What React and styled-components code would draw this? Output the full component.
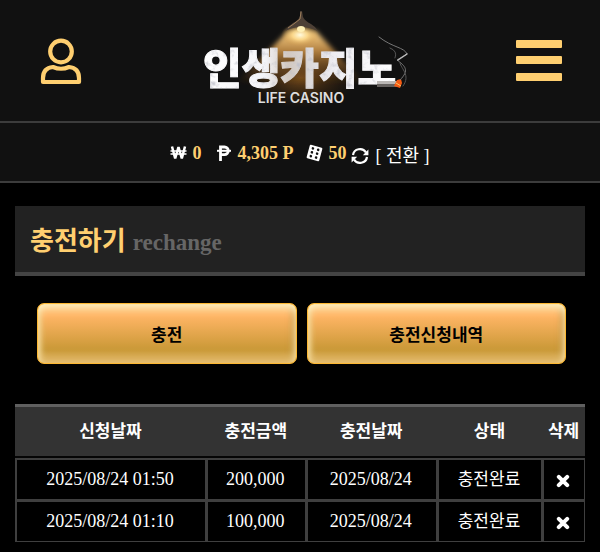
import React from "react";
import styled, { createGlobalStyle } from "styled-components";

const serif = '"Liberation Serif", "Noto Sans CJK KR", serif';
const korean = '"Noto Sans CJK KR", sans-serif';
const gold = "#ffcf70";

const GlobalStyle = createGlobalStyle`
  *, *::before, *::after { box-sizing: border-box; }
  body { margin: 0; background: #000; color: #fff; font-family: ${serif}; }
  button { color: inherit; cursor: pointer; }
`;

const Header = styled.header`
  display: flex;
  align-items: center;
  justify-content: space-between;
  height: 123px;
  padding: 0 36px;
  background: #111;
  border-bottom: 2px solid #3c3c3c;
`;

const IconButton = styled.button`
  display: flex;
  padding: 0;
  border: 0;
  background: none;
`;

const LogoLink = styled.a`
  display: block;
  height: 121px;
`;

const Balance = styled.div`
  display: flex;
  align-items: center;
  justify-content: center;
  height: 60px;
  padding-top: 1px;
  background: #111;
  border-bottom: 2px solid #3c3c3c;
  font-size: 18px;
  line-height: 24px;
`;

const Amount = styled.span`
  display: flex;
  align-items: center;
  gap: 5px;
  margin-right: ${(p) => p.$after}px;
  color: ${gold};
  font-weight: bold;
`;

const Convert = styled.button`
  display: flex;
  align-items: center;
  gap: 6px;
  padding: 6px 0 0;
  border: 0;
  background: none;
  font-family: ${serif};
  font-size: 18px;
  line-height: 24px;
`;

const Main = styled.main`
  padding: 23px 15px 8px;
`;

const TitleBar = styled.div`
  display: flex;
  align-items: baseline;
  gap: 7px;
  height: 70px;
  padding: 13px 15px 0;
  background: #222;
  border-bottom: 4px solid #444;
`;

const Title = styled.h1`
  margin: 0;
  color: ${gold};
  font: bold 26px/40px ${korean};
`;

const Subtitle = styled.span`
  color: #666;
  font-size: 23px;
  font-weight: bold;
`;

const Actions = styled.div`
  display: grid;
  grid-template-columns: 1fr 1fr;
  gap: 10px;
  padding: 27px 19px 40px 22px;
`;

const Action = styled.button`
  height: 61px;
  padding: 0;
  border: 1px solid #fdb833;
  border-radius: 7px;
  background: linear-gradient(#ffb565 20%, #c99836 78%, #d2a34b);
  box-shadow: inset 0 0 1px #fdb833, inset 0 5px 8px #fff3c4,
    inset 0 -7px 8px #e2b969, inset 2px 0 5px #ffe0a077,
    inset -4px 0 6px #a9782b99;
  color: #000;
  font: bold 17px/24px ${korean};
`;

const Table = styled.table`
  width: 100%;
  border-collapse: separate;
  border-spacing: 0;
  table-layout: fixed;
  text-align: center;
`;

const Col = styled.col`
  width: ${(p) => p.$width};
`;

const HeadCell = styled.th`
  height: 54px;
  padding: 0 0 4px;
  background: #333;
  border-top: 3px solid #606060;
  border-bottom: 2px solid #050505;
  font: bold 17px/24px ${korean};
  white-space: nowrap;
`;

const Cell = styled.td`
  height: 42px;
  padding: 0 2px 2px 0;
  border: solid #3f3f3f;
  border-width: 2px 1px 1px 2px;
  font-size: 18px;
  line-height: 24px;
`;

const StatusCell = styled(Cell)`
  padding-bottom: 4px;
  font-family: ${korean};
  font-size: 17px;
`;

const Remove = styled.button`
  display: inline-flex;
  padding: 2px 0 0;
  border: 0;
  background: none;
  vertical-align: middle;
`;

const LogoText = styled.text`
  font-family: ${korean};
  font-size: 42px;
  font-weight: 900;
`;

const LogoCaption = styled.text`
  font-family: Inter, sans-serif;
  font-size: 14px;
  font-weight: 600;
`;

const UserIcon = () => (
  <svg width="50" height="50" viewBox="0 0 50 50" fill="none" stroke={gold} strokeWidth="4.2" strokeLinejoin="round" aria-hidden="true">
    <circle cx="25" cy="15.5" r="10.8" />
    <path d="M7 46V42Q7 32 17 31Q25 34.5 33 31Q43 32 43 42V46Z" />
  </svg>
);

const MenuIcon = () => (
  <svg width="48" height="42" viewBox="0 0 48 42" fill={gold} aria-hidden="true">
    <rect x="0" y="0" width="46" height="8" rx="1" />
    <rect x="0" y="16" width="46" height="8" rx="1" />
    <rect x="0" y="33" width="46" height="8" rx="1" />
  </svg>
);

const WonIcon = () => (
  <svg width="17" height="18" viewBox="0 0 17 18" fill="none" stroke="#fff" aria-hidden="true">
    <path d="M2 2.5L5.2 14.5L8.5 3L11.8 14.5L15 2.5" strokeWidth="2.5" strokeLinejoin="bevel" />
    <path d="M.5 7H16.5M.5 10H16.5" strokeWidth="1.3" />
  </svg>
);

const PesoIcon = () => (
  <svg width="16" height="18" viewBox="0 0 16 18" fill="none" stroke="#fff" aria-hidden="true">
    <path d="M4.5 17V3H8.5A3.7 3.7 0 0 1 8.5 10.6H4.5" strokeWidth="2.8" />
    <path d="M1 6.8H15" strokeWidth="2" />
  </svg>
);

const DiceIcon = () => (
  <svg width="17" height="18" viewBox="0 0 17 18" aria-hidden="true">
    <g transform="rotate(15 8.5 9)">
      <rect x="2" y="2" width="13" height="14" rx="1" fill="#fff" />
      <g fill="#111">
        <circle cx="5.8" cy="5" r="1.3" /><circle cx="11.2" cy="5" r="1.3" />
        <circle cx="5.8" cy="9" r="1.3" /><circle cx="11.2" cy="9" r="1.3" />
        <circle cx="5.8" cy="13" r="1.3" /><circle cx="11.2" cy="13" r="1.3" />
      </g>
    </g>
  </svg>
);

const SyncIcon = () => (
  <svg width="18" height="18" viewBox="0 0 18 18" aria-hidden="true">
    <g fill="none" stroke="#fff" strokeWidth="2.2">
      <path d="M2 8A7 6.8 0 0 1 15 5.5" />
      <path d="M16 10A7 6.8 0 0 1 3 12.5" />
    </g>
    <path d="M17.4 2.5V8.2H11.8ZM.6 15.5V9.8H6.2Z" fill="#fff" />
  </svg>
);

const CrossIcon = () => (
  <svg width="14" height="14" viewBox="0 0 14 14" aria-hidden="true">
    <path d="M2.8 2.8L11.2 11.2M11.2 2.8L2.8 11.2" stroke="#fff" strokeWidth="4" strokeLinecap="round" />
  </svg>
);

const Logo = () => (
  <svg width="220" height="121" viewBox="0 0 220 121" role="img" aria-label="인생카지노 LIFE CASINO">
    <defs>
      <linearGradient id="beam" x1="0" y1="0" x2="0" y2="1">
        <stop offset="0" stopColor="#ffd78c" />
        <stop offset=".4" stopColor="#bd8640" stopOpacity=".9" />
        <stop offset="1" stopColor="#6a3d12" stopOpacity="0" />
      </linearGradient>
      <radialGradient id="halo">
        <stop offset="0" stopColor="#8d5a20" stopOpacity=".8" />
        <stop offset="1" stopColor="#45270a" stopOpacity="0" />
      </radialGradient>
      <radialGradient id="bulb">
        <stop offset="0" stopColor="#fffbe0" />
        <stop offset=".4" stopColor="#ffdc8e" stopOpacity=".85" />
        <stop offset="1" stopColor="#c78c3d" stopOpacity="0" />
      </radialGradient>
      <linearGradient id="stone" x1="0" y1="0" x2="1" y2="0">
        <stop offset="0" stopColor="#fff" />
        <stop offset=".32" stopColor="#f4f4f8" />
        <stop offset=".44" stopColor="#d2c8c0" />
        <stop offset=".55" stopColor="#dcd9da" />
        <stop offset=".68" stopColor="#eeedf2" />
        <stop offset="1" stopColor="#fff" />
      </linearGradient>
      <filter id="soft" x="-20%" y="-20%" width="140%" height="140%">
        <feGaussianBlur stdDeviation="2.5" />
      </filter>
      <filter id="haze" x="-20%" y="-20%" width="140%" height="140%">
        <feGaussianBlur stdDeviation=".5" />
      </filter>
      <filter id="grain" x="-5%" y="-5%" width="110%" height="110%">
        <feTurbulence type="fractalNoise" baseFrequency=".16" numOctaves="3" seed="7" result="noise" />
        <feColorMatrix in="noise" values="0 0 0 0 .5  0 0 0 0 .51  0 0 0 0 .58  2.2 0 0 0 -1.15" result="marks" />
        <feComposite in="marks" in2="SourceAlpha" operator="in" result="texture" />
        <feMerge><feMergeNode in="SourceGraphic" /><feMergeNode in="texture" /></feMerge>
      </filter>
    </defs>
    <ellipse cx="110" cy="78" rx="56" ry="30" fill="url(#halo)" />
    <path d="M97 31L45 84H174L125 31Z" fill="url(#beam)" filter="url(#soft)" />
    <ellipse cx="109" cy="35" rx="19" ry="12" fill="url(#bulb)" />
    <path d="M109 11H111L112 17Q114 21 120 24Q125 27 127 31Q110 23 94 31Q97 26 102 23Q108 20 109 16Z" fill="#4d4036" />
    <path d="M110 12L109 19Q103 24 97 28" fill="none" stroke="#9b7c59" />
    <ellipse cx="110" cy="29" rx="4" ry="3" fill="#fff0b5" />
    <LogoText x="12" y="84" fill="url(#stone)" stroke="url(#stone)" strokeWidth="1" filter="url(#grain)">인생카지노</LogoText>
    <path d="M186 81H206V87H186Z" fill="#b9b6b4" />
    <path d="M186 84H206V87H186Z" fill="#65615f" />
    <path d="M206 80L210 79L211 83L209 88L203 86Z" fill="#f45b13" />
    <path d="M205 83L210 86" stroke="#ffc265" />
    <g fill="none" strokeLinecap="round" filter="url(#haze)">
      <path d="M209 80C219 70 214 66 206 60L216 54C213 47 202 48 188 37" stroke="#777" />
      <path d="M212 86C220 75 210 69 209 63M199 48Q207 51 204 58" stroke="#555" />
      <path d="M207 60L216 54" stroke="#bbb" strokeWidth="1.5" />
    </g>
    <LogoCaption x="110" y="103" textAnchor="middle" fill="#ddd">LIFE CASINO</LogoCaption>
  </svg>
);

const columns = [
  ["신청날짜", "33.5%"],
  ["충전금액", "17.5%"],
  ["충전날짜", "23%"],
  ["상태", "18.5%"],
  ["삭제", "7.5%"],
];

const rows = [
  ["2025/08/24 01:50", "200,000", "2025/08/24", "충전완료"],
  ["2025/08/24 01:10", "100,000", "2025/08/24", "충전완료"],
];

export default function App() {
  return (
    <>
      <GlobalStyle />
      <Header>
        <IconButton aria-label="내 정보"><UserIcon /></IconButton>
        <LogoLink href="#"><Logo /></LogoLink>
        <IconButton aria-label="메뉴"><MenuIcon /></IconButton>
      </Header>
      <Balance>
        <Amount $after={15}><WonIcon />0</Amount>
        <Amount $after={13}><PesoIcon />4,305 P</Amount>
        <Amount $after={5}><DiceIcon />50</Amount>
        <Convert><SyncIcon />[ 전환 ]</Convert>
      </Balance>
      <Main>
        <TitleBar>
          <Title>충전하기</Title>
          <Subtitle>rechange</Subtitle>
        </TitleBar>
        <Actions>
          <Action>충전</Action>
          <Action>충전신청내역</Action>
        </Actions>
        <Table>
          <colgroup>
            {columns.map(([name, width]) => <Col key={name} $width={width} />)}
          </colgroup>
          <thead>
            <tr>{columns.map(([name]) => <HeadCell key={name} scope="col">{name}</HeadCell>)}</tr>
          </thead>
          <tbody>
            {rows.map(([requested, amount, charged, status]) => (
              <tr key={requested}>
                <Cell>{requested}</Cell>
                <Cell>{amount}</Cell>
                <Cell>{charged}</Cell>
                <StatusCell>{status}</StatusCell>
                <Cell><Remove aria-label={`${requested} 삭제`}><CrossIcon /></Remove></Cell>
              </tr>
            ))}
          </tbody>
        </Table>
      </Main>
    </>
  );
}
